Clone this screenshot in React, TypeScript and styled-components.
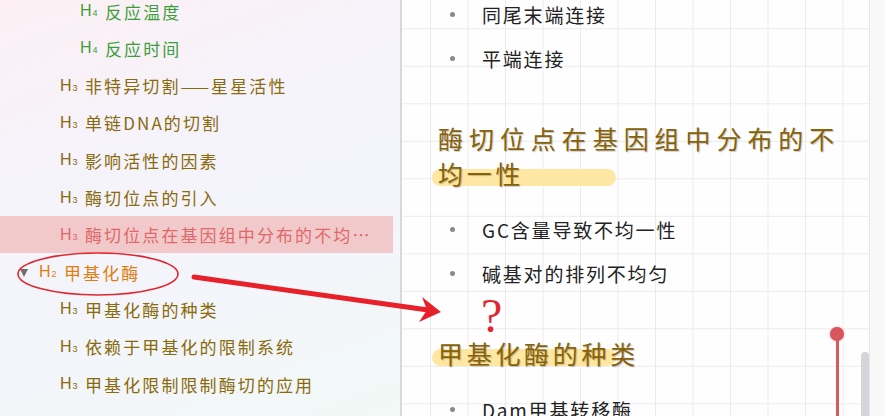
import React from "react";
import styled, { createGlobalStyle } from "styled-components";

type OutlineItem = {
	level: 2 | 3 | 4;
	text: string;
	active?: boolean;
	folder?: boolean;
};

const OUTLINE: OutlineItem[] = [
	{ level: 4, text: "反应温度" },
	{ level: 4, text: "反应时间" },
	{ level: 3, text: "非特异切割——星星活性" },
	{ level: 3, text: "单链DNA的切割" },
	{ level: 3, text: "影响活性的因素" },
	{ level: 3, text: "酶切位点的引入" },
	{ level: 3, text: "酶切位点在基因组中分布的不均一性", active: true },
	{ level: 2, text: "甲基化酶", folder: true },
	{ level: 3, text: "甲基化酶的种类" },
	{ level: 3, text: "依赖于甲基化的限制系统" },
	{ level: 3, text: "甲基化限制限制酶切的应用" },
];

const LEVEL_COLORS = {
	2: "#e07d12",
	3: "#8a6a0c",
	4: "#3c9e3a",
};

const GlobalStyle = createGlobalStyle`
	html, body {
		margin: 0;
		padding: 0;
		background: #ffffff;
	}
	* {
		box-sizing: border-box;
	}
`;

export default function App() {
	return (
		<>
			<GlobalStyle />
			<Frame>
				<Sidebar>
					<Outline>
						{OUTLINE.map((item, idx) => (
							<OutlineRow
								key={`${item.text}-${idx}`}
								$level={item.level}
								$active={!!item.active}
							>
								{item.folder && <Caret />}
								<Label>
									H<sub>{item.level}</sub>
								</Label>
								<RowText>{item.text}</RowText>
							</OutlineRow>
						))}
					</Outline>
				</Sidebar>

				<Editor>
					<Content>
						<BulletList>
							<Bullet>同尾末端连接</Bullet>
							<Bullet>平端连接</Bullet>
						</BulletList>
						<Heading>酶切位点在基因组中分布的不均一性</Heading>
						<BulletList>
							<Bullet>GC含量导致不均一性</Bullet>
							<Bullet>碱基对的排列不均匀</Bullet>
						</BulletList>
						<Heading>甲基化酶的种类</Heading>
						<BulletList>
							<Bullet>Dam甲基转移酶</Bullet>
						</BulletList>
					</Content>
					<Marker />
					<Thumb />
				</Editor>
				<Track />

				{/* hand-drawn annotations over the screenshot */}
				<Annotations width="885" height="416" viewBox="0 0 885 416">
					<ellipse
						cx="98"
						cy="274"
						rx="80"
						ry="21"
						fill="none"
						stroke="#e3262e"
						strokeWidth="1.6"
					/>
					<line
						x1="194"
						y1="277"
						x2="428"
						y2="310"
						stroke="#e8202a"
						strokeWidth="5"
						strokeLinecap="round"
					/>
					<polygon points="441,312 422,297 427,310 419,322" fill="#e8202a" />
				</Annotations>
				<Question>?</Question>
			</Frame>
		</>
	);
}

const Frame = styled.div`
	position: relative;
	display: flex;
	width: 885px;
	height: 416px;
	overflow: hidden;
	font-family: "Noto Sans CJK SC", "Liberation Sans", sans-serif;
`;

const Sidebar = styled.aside`
	flex: 0 0 402px;
	height: 100%;
	overflow: hidden;
	background: linear-gradient(
		160deg,
		#fcf0f4 0%,
		#f6f3fa 30%,
		#f3f5fb 60%,
		#f2f8f6 100%
	);
	border-right: 2px solid #d6d8dc;
`;

const Outline = styled.div`
	margin-top: -7.6px;
	width: 393px;
`;

const OutlineRow = styled.div<{ $level: number; $active: boolean }>`
	display: flex;
	align-items: center;
	height: 37.3px;
	padding-left: ${(p) => (p.$level === 2 ? 20 : (p.$level - 2) * 20 + 40)}px;
	padding-right: 18px;
	font-size: 17px;
	letter-spacing: 2.1px;
	white-space: nowrap;
	color: ${(p) =>
		p.$active ? "#e06868" : LEVEL_COLORS[p.$level as 2 | 3 | 4]};
	background: ${(p) => (p.$active ? "#f2c9ca" : "transparent")};
`;

const Caret = styled.span`
	flex: none;
	width: 0;
	height: 0;
	margin: 1px 11px 0 0;
	border-left: 4.5px solid transparent;
	border-right: 4.5px solid transparent;
	border-top: 8px solid #6e6e6e;
`;

const Label = styled.span`
	flex: none;
	width: 25px;
	font-family: "Liberation Sans", sans-serif;
	font-size: 16px;
	letter-spacing: 0;

	sub {
		font-size: 9px;
		vertical-align: baseline;
		margin-left: 1px;
	}
`;

const RowText = styled.span`
	min-width: 0;
	overflow: hidden;
	text-overflow: ellipsis;
`;

const Editor = styled.main`
	position: relative;
	flex: 0 0 467px;
	height: 100%;
	background-color: #fefefe;
	background-image: linear-gradient(to right, #ebebeb 1px, transparent 1px),
		linear-gradient(to bottom, #ebebeb 1px, transparent 1px);
	background-size: 37.5px 37.5px;
	background-position: 28px 28.3px;
`;

const Track = styled.div`
	flex: 1;
	height: 100%;
	background: #f8f8f8;
	border-left: 1px solid #e6e6e6;
`;

const Content = styled.div`
	width: 436px;
	padding-left: 36px;
	margin-top: -7px;
	color: #222222;
`;

const BulletList = styled.ul`
	list-style: none;
	margin: 0;
	padding: 0;
`;

const Bullet = styled.li`
	display: flex;
	align-items: center;
	height: 43.5px;
	font-size: 19px;
	letter-spacing: 1.8px;

	&::before {
		content: "";
		flex: none;
		width: 5px;
		height: 5px;
		border-radius: 50%;
		background: #8a8a8a;
		margin: 0 27px 0 12px;
	}
`;

const Heading = styled.h3`
	position: relative;
	z-index: 0;
	margin: 41px 0 17px;
	font-size: 25px;
	font-weight: normal;
	line-height: 35px;
	letter-spacing: 3.7px;
	text-align: justify;
	color: #876208;
	text-shadow: 1px 1px 1px rgba(0, 0, 0, 0.22);

	&::before {
		content: "";
		position: absolute;
		z-index: -1;
		left: -6px;
		bottom: 5px;
		width: 184px;
		height: 17px;
		border-radius: 9px;
		background: #fde7a3;
	}
`;

const Marker = styled.div`
	position: absolute;
	left: 428px;
	top: 327px;
	width: 14px;
	height: 100px;

	&::before {
		content: "";
		position: absolute;
		left: 0;
		top: 0;
		width: 14px;
		height: 14px;
		border-radius: 50%;
		background: #d9545b;
		box-shadow: 0 0 2px rgba(217, 84, 91, 0.6);
	}

	&::after {
		content: "";
		position: absolute;
		left: 5.5px;
		top: 7px;
		width: 3px;
		height: 100px;
		background: #d65a60;
	}
`;

const Thumb = styled.div`
	position: absolute;
	right: 0;
	top: 352px;
	width: 8px;
	height: 90px;
	border-radius: 4px;
	background: #d2d5d9;
`;

const Annotations = styled.svg`
	position: absolute;
	left: 0;
	top: 0;
	pointer-events: none;
`;

const Question = styled.div`
	position: absolute;
	left: 481px;
	top: 298px;
	font-family: "Liberation Serif", serif;
	font-size: 48px;
	line-height: 36px;
	color: #e3262e;
	pointer-events: none;
`;
